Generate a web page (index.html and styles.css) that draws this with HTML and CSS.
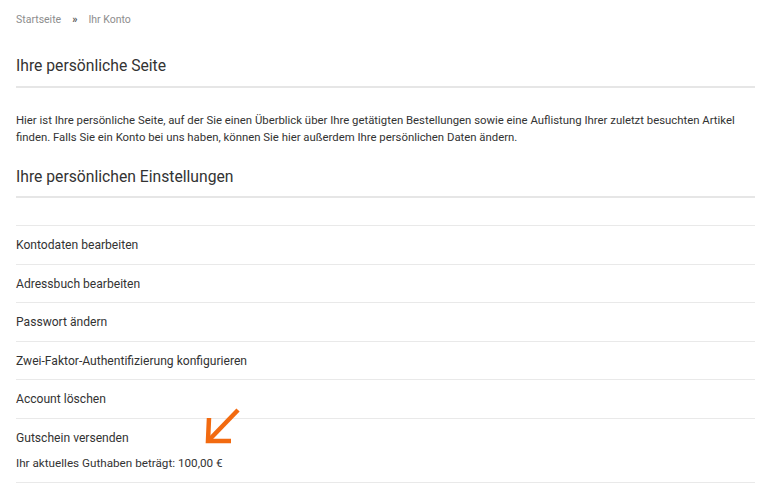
FILE: index.html
```html
<!DOCTYPE html>
<html lang="de">
<head>
<meta charset="utf-8">
<link rel="stylesheet" href="styles.css">
</head>
<body>
<div class="page">
  <nav class="breadcrumb">
    <a href="#">Startseite</a>
    <span class="sep">»</span>
    <span>Ihr Konto</span>
  </nav>
  <h1 class="heading">Ihre persönliche Seite</h1>
  <p class="intro">Hier ist Ihre persönliche Seite, auf der Sie einen Überblick über Ihre getätigten Bestellungen sowie eine Auflistung Ihrer zuletzt besuchten Artikel finden. Falls Sie ein Konto bei uns haben, können Sie hier außerdem Ihre persönlichen Daten ändern.</p>
  <h2 class="heading heading-2">Ihre persönlichen Einstellungen</h2>
  <ul class="settings">
    <li class="empty"></li>
    <li><a href="#">Kontodaten bearbeiten</a></li>
    <li><a href="#">Adressbuch bearbeiten</a></li>
    <li><a href="#">Passwort ändern</a></li>
    <li><a href="#">Zwei-Faktor-Authentifizierung konfigurieren</a></li>
    <li><a href="#">Account löschen</a></li>
    <li class="voucher">
      <a href="#">Gutschein versenden</a>
      <div class="balance">Ihr aktuelles Guthaben beträgt: 100,00 €</div>
      <svg class="arrow" width="40" height="40" viewBox="0 0 40 40">
        <path d="M36 4 L8 33" stroke="#f26a10" stroke-width="4.5" fill="none" stroke-linecap="butt"/>
        <path d="M7 12 L6 35 L29 35" stroke="#f26a10" stroke-width="4.5" fill="none" stroke-linejoin="miter"/>
      </svg>
    </li>
  </ul>
</div>
</body>
</html>
```

FILE: styles.css
```css
* { box-sizing: border-box; }
html, body { margin: 0; padding: 0; background: #fff; }
body {
  font-family: Roboto, "Liberation Sans", sans-serif;
  color: #333;
}
.page {
  padding: 13px 13px 0 16px;
}
.breadcrumb {
  font-size: 10.5px;
  line-height: 14px;
  color: #8d8d8d;
  display: flex;
}
.breadcrumb a { color: #8d8d8d; text-decoration: none; }
.breadcrumb .sep { color: #555; margin: 0 11px 0 11px; font-weight: bold; }
.heading {
  font-size: 15.7px;
  font-weight: 400;
  line-height: 20px;
  margin: 0;
  padding: 29px 0 10px;
  border-bottom: 2px solid #e6e6e6;
  color: #333;
}
.heading-2 {
  padding: 0 0 9px;
}
.intro {
  font-size: 11.35px;
  line-height: 17px;
  margin: 24px 0 21px;
  color: #333;
}
.settings {
  list-style: none;
  margin: 0;
  padding: 0;
}
.settings li {
  border-bottom: 1px solid #e9e9e9;
  font-size: 12.1px;
  line-height: 16px;
  padding: 11px 0 11px;
  height: 38.6px;
}
.settings li.empty { height: 28px; padding: 0; }
.settings a { color: #333; text-decoration: none; }
.settings li.voucher {
  height: 64px;
  position: relative;
  padding-top: 11px;
}
.balance {
  font-size: 11.7px;
  line-height: 16px;
  margin-top: 9px;
}
.arrow {
  position: absolute;
  left: 186px;
  top: -13px;
}
```
